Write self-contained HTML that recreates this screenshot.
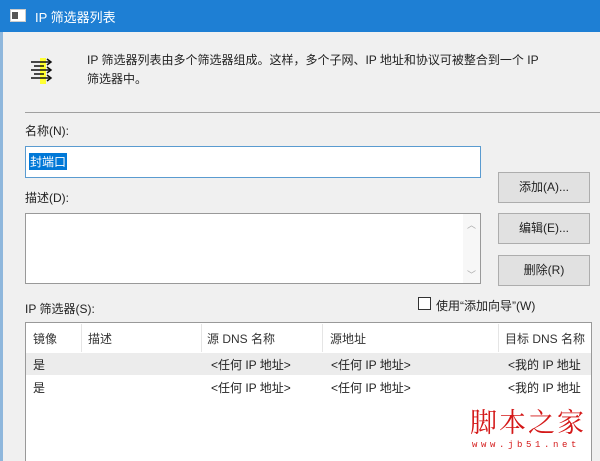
<!DOCTYPE html>
<html><head><meta charset="utf-8"><style>
*{margin:0;padding:0;box-sizing:border-box}
html,body{width:600px;height:461px;overflow:hidden}
body{background:#f0f0f0;font-family:"Liberation Sans","Noto Sans CJK SC",sans-serif;font-size:12px;color:#222;position:relative}
.a{position:absolute;white-space:nowrap}
.title{left:0;top:0;width:600px;height:32px;background:#1e7fd4;color:#fff;font-size:13px}
.btn{background:#e1e1e1;border:1px solid #adadad;text-align:center;line-height:29px;width:92px;height:31px;left:498px}
.box{background:#fff;border:1px solid #7a7a7a}
.hdr{color:#333}
.sep{width:1px;background:#e5e5e5;top:1px;height:28px}
</style></head><body>
<div class="a title">
 <div class="a" style="left:10px;top:9px;width:16px;height:13px;background:#fff;border:1px solid #ccc"></div>
 <div class="a" style="left:12px;top:12px;width:6px;height:7px;background:#555"></div>
 <div class="a" style="left:35px;top:7px">IP 筛选器列表</div>
</div>
<div class="a" style="left:0;top:32px;width:3px;height:429px;background:#8fb7dc"></div>
<svg class="a" style="left:28px;top:56px" width="28" height="30" viewBox="0 0 28 30">
 <rect x="12" y="2" width="6" height="26" fill="#ffff33"/>
 <g stroke="#111" stroke-width="1.5" fill="none">
  <path d="M3 6H22M3 14H22M3 22H22"/>
  <path d="M19 3l4 3-4 3M19 11l4 3-4 3M19 19l4 3-4 3"/>
  <path d="M6 10H16M6 18H16"/>
 </g>
</svg>
<div class="a" style="left:87px;top:51px;line-height:19px;width:500px;white-space:normal">IP 筛选器列表由多个筛选器组成。这样，多个子网、IP 地址和协议可被整合到一个 IP<br>筛选器中。</div>
<div class="a" style="left:25px;top:112px;width:575px;height:1px;background:#a0a0a0"></div>
<div class="a" style="left:25px;top:122px">名称(N):</div>
<div class="a box" style="left:25px;top:146px;width:456px;height:32px;border-color:#5a9bd0"><span class="a" style="left:3px;top:6px;background:#0078d7;color:#fff;padding:0 1px">封端口</span></div>
<div class="a" style="left:25px;top:189px">描述(D):</div>
<div class="a box" style="left:25px;top:213px;width:456px;height:71px;border-color:#999">
 <div class="a" style="right:0;top:0;width:17px;height:69px;background:#f7f7f7"></div>
 <div class="a" style="right:4px;top:4px;color:#aaa;font-size:9px">︿</div>
 <div class="a" style="right:4px;top:54px;color:#aaa;font-size:9px">﹀</div>
</div>
<div class="a btn" style="top:172px">添加(A)...</div>
<div class="a btn" style="top:213px">编辑(E)...</div>
<div class="a btn" style="top:255px">删除(R)</div>
<div class="a" style="left:418px;top:297px;width:13px;height:13px;border:1px solid #333;background:#fff"></div>
<div class="a" style="left:436px;top:297px">使用“添加向导”(W)</div>
<div class="a" style="left:25px;top:300px">IP 筛选器(S):</div>
<div class="a box" style="left:25px;top:322px;width:567px;height:145px;border-color:#999;overflow:hidden">
 <div class="a hdr" style="left:7px;top:7px">镜像</div>
 <div class="a hdr" style="left:62px;top:7px">描述</div>
 <div class="a hdr" style="left:181px;top:7px">源 DNS 名称</div>
 <div class="a hdr" style="left:304px;top:7px">源地址</div>
 <div class="a hdr" style="left:479px;top:7px">目标 DNS 名称</div>
 <div class="a sep" style="left:55px"></div><div class="a sep" style="left:175px"></div><div class="a sep" style="left:296px"></div><div class="a sep" style="left:472px"></div>
 <div class="a" style="left:0;top:30px;width:567px;height:22px;background:#ececec"></div>
 <div class="a" style="left:7px;top:33px">是</div><div class="a" style="left:185px;top:33px">&lt;任何 IP 地址&gt;</div><div class="a" style="left:305px;top:33px">&lt;任何 IP 地址&gt;</div><div class="a" style="left:482px;top:33px">&lt;我的 IP 地址</div>
 <div class="a" style="left:7px;top:56px">是</div><div class="a" style="left:185px;top:56px">&lt;任何 IP 地址&gt;</div><div class="a" style="left:305px;top:56px">&lt;任何 IP 地址&gt;</div><div class="a" style="left:482px;top:56px">&lt;我的 IP 地址</div>
</div>
<div class="a" style="left:470px;top:404px;color:#d41818;font-size:27px;letter-spacing:2px;font-family:'Noto Serif CJK SC',serif;line-height:34px">脚本之家</div>
<div class="a" style="left:472px;top:440px;color:#d41818;font-size:9px;letter-spacing:3.6px;font-family:'Liberation Mono',monospace">www.jb51.net</div>
</body></html>
